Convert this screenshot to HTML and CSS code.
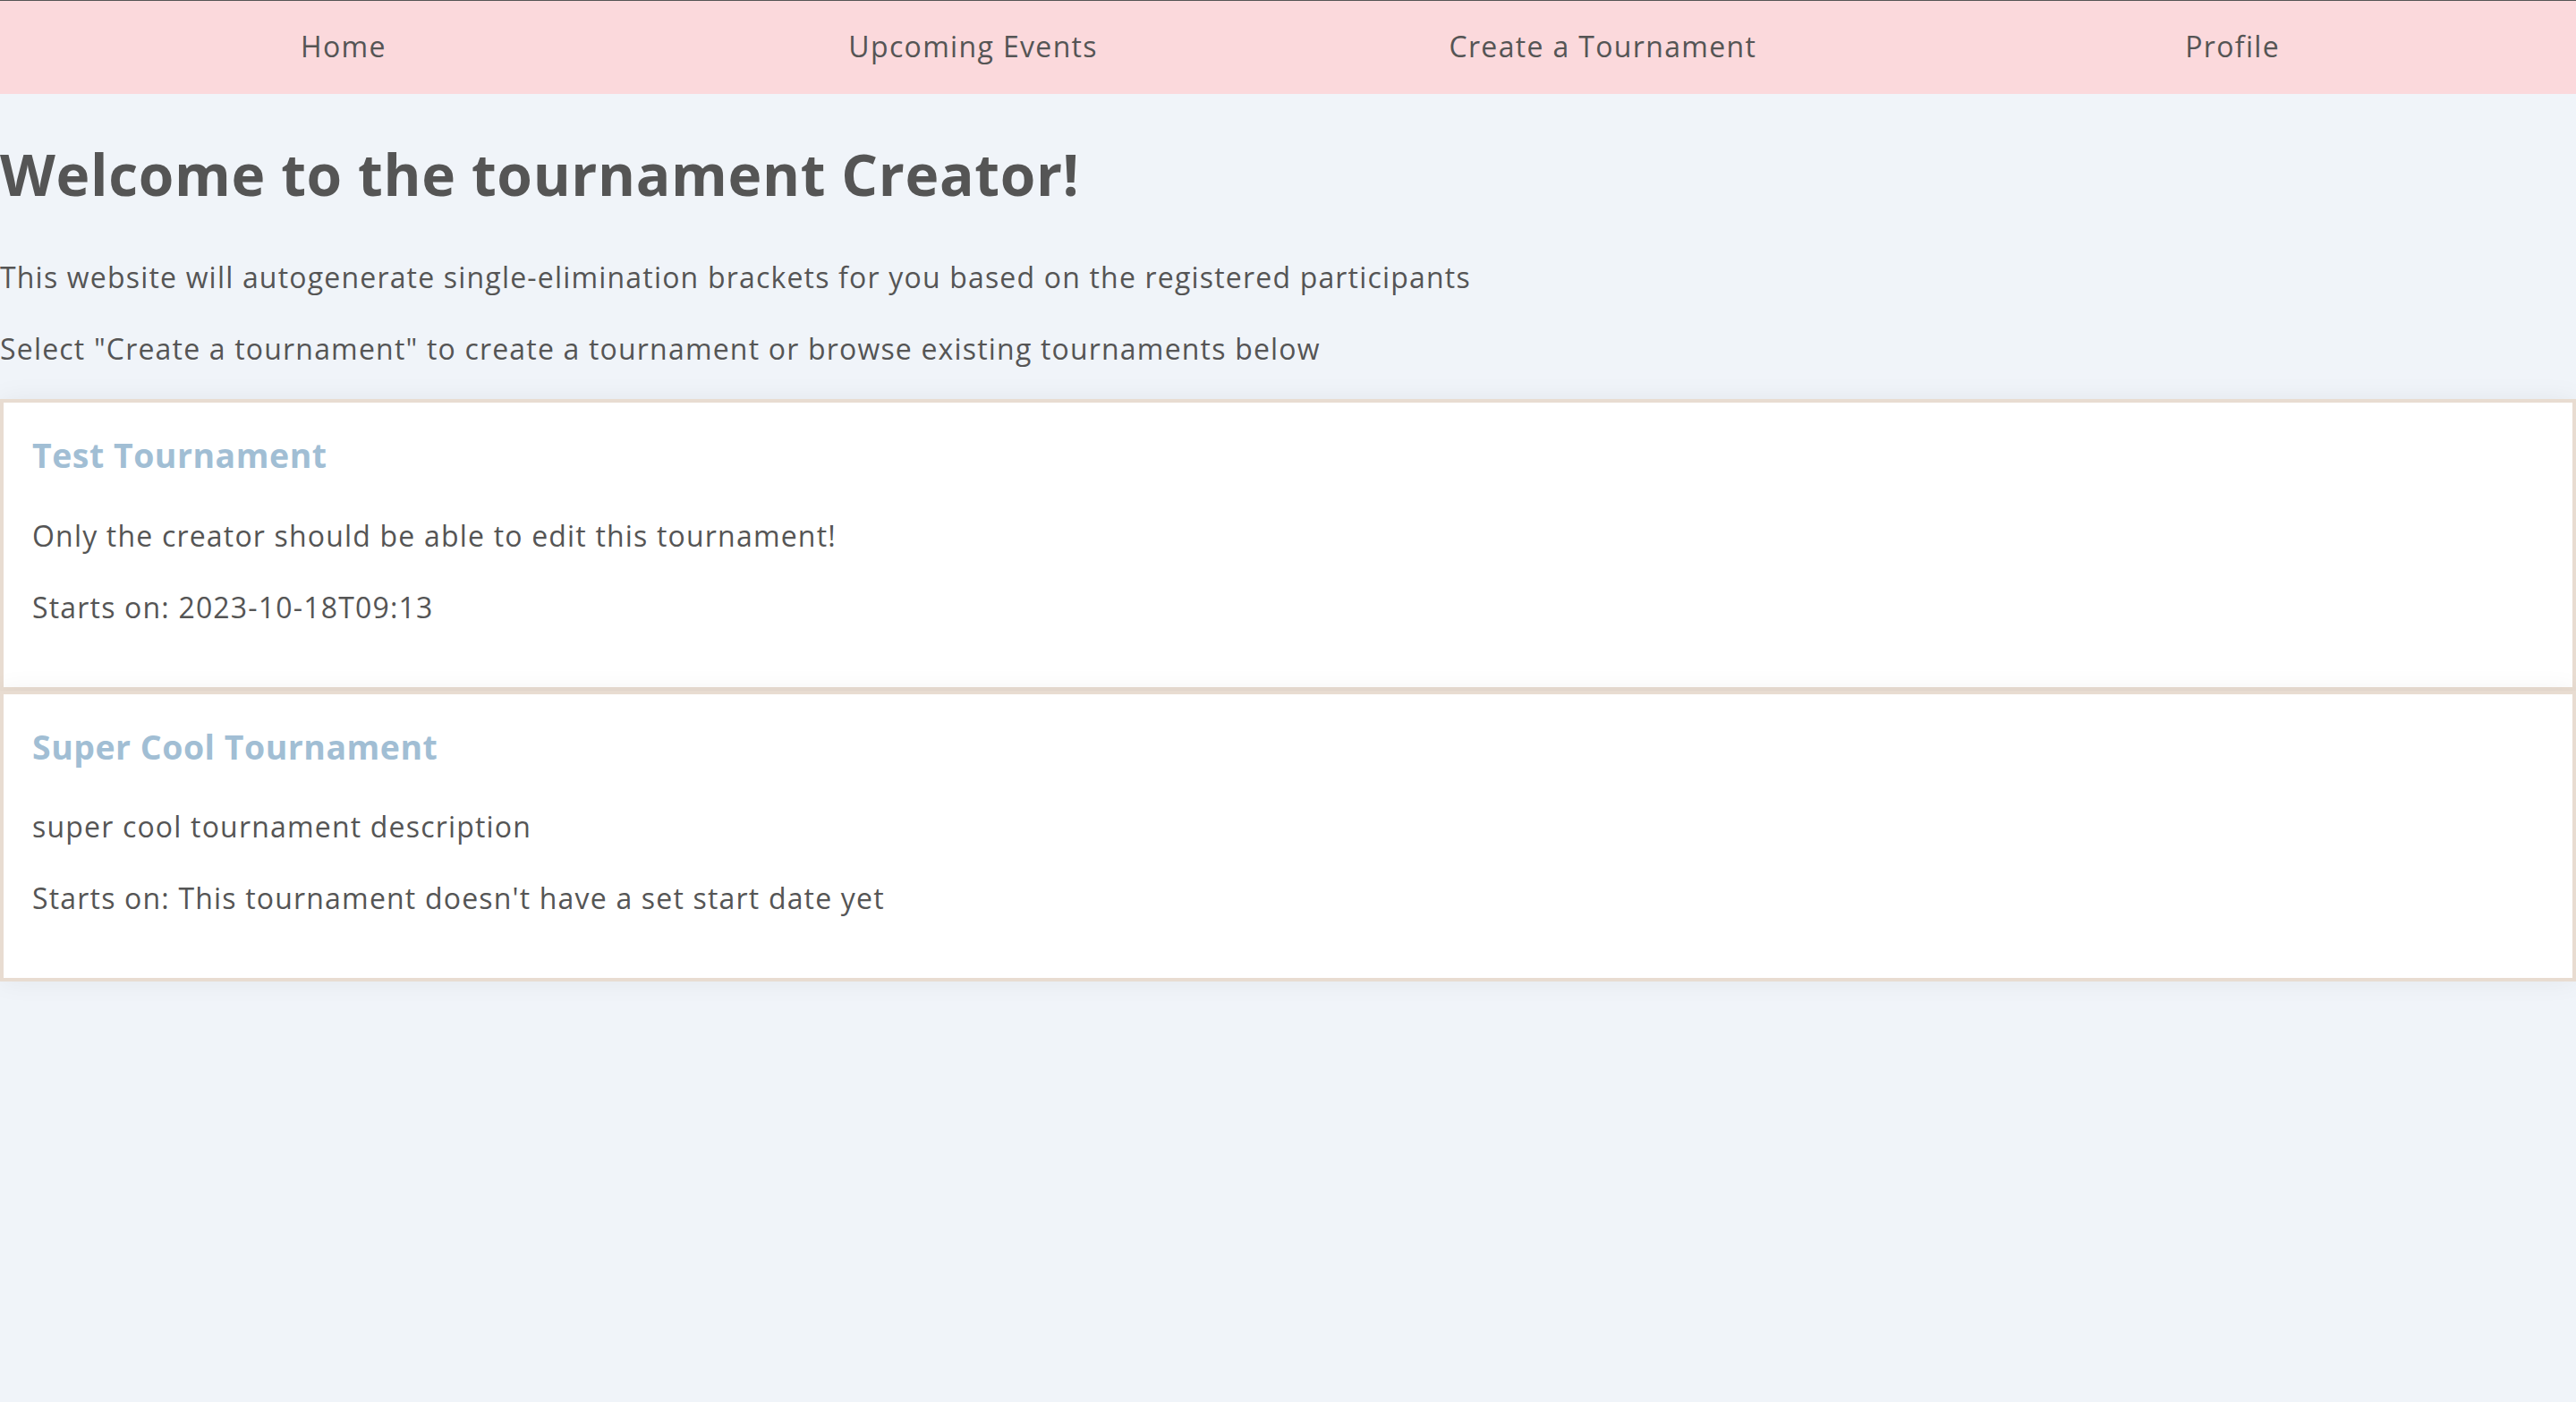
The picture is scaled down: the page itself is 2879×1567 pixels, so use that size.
FILE: index.html
```html
<!DOCTYPE html>
<html lang="en">
<head>
<meta charset="utf-8">
<title>Tournament Creator</title>
<link rel="stylesheet" href="styles.css">
</head>
<body>
<nav class="nav">
  <a class="nav-link" href="#">Home</a>
  <a class="nav-link" href="#">Upcoming Events</a>
  <a class="nav-link" href="#">Create a Tournament</a>
  <a class="nav-link" href="#">Profile</a>
</nav>
<main class="main">
  <h1 class="title">Welcome to the tournament Creator!</h1>
  <p class="text">This website will autogenerate single-elimination brackets for you based on the registered participants</p>
  <p class="text">Select "Create a tournament" to create a tournament or browse existing tournaments below</p>
  <div class="list">
    <div class="card">
      <h3 class="card-title">Test Tournament</h3>
      <p class="text">Only the creator should be able to edit this tournament!</p>
      <p class="text">Starts on: 2023-10-18T09:13</p>
    </div>
    <div class="card">
      <h3 class="card-title">Super Cool Tournament</h3>
      <p class="text">super cool tournament description</p>
      <p class="text">Starts on: This tournament doesn't have a set start date yet</p>
    </div>
  </div>
</main>
</body>
</html>
```
FILE: styles.css
```css
html, body {
  margin: 0;
  padding: 0;
}
body {
  background: #f0f4f9;
  color: #555555;
  font-family: "Open Sans", "Noto Sans", sans-serif;
  font-size: 32px;
  line-height: 1.5;
  min-height: 1567px;
}
.nav {
  display: flex;
  align-items: center;
  height: 104px;
  padding: 0 32px;
  background: #fbd9dc;
  border-top: 1px solid #555555;
}
.nav-link {
  flex: 1;
  text-align: center;
  color: #555555;
  text-decoration: none;
  font-size: 32px;
  letter-spacing: 0.042em;
  padding-bottom: 2px;
}
.title {
  font-size: 64px;
  font-weight: 700;
  margin: 42px 0 43px;
  line-height: 1.5;
  letter-spacing: 0.01em;
}
.text {
  margin: 32px 0;
  letter-spacing: 0.037em;
}
.list {
  display: flex;
  flex-direction: column;
}
.card {
  background: #ffffff;
  border: 4px solid #e8dcd1;
  padding: 31px 32px 33px;
  box-shadow: 0 0 28px rgba(0, 0, 0, 0.06);
}
.card-title {
  color: #a1bed4;
  font-size: 37.44px;
  font-weight: 700;
  margin: 0 0 37.44px;
  letter-spacing: 0.014em;
}
```
